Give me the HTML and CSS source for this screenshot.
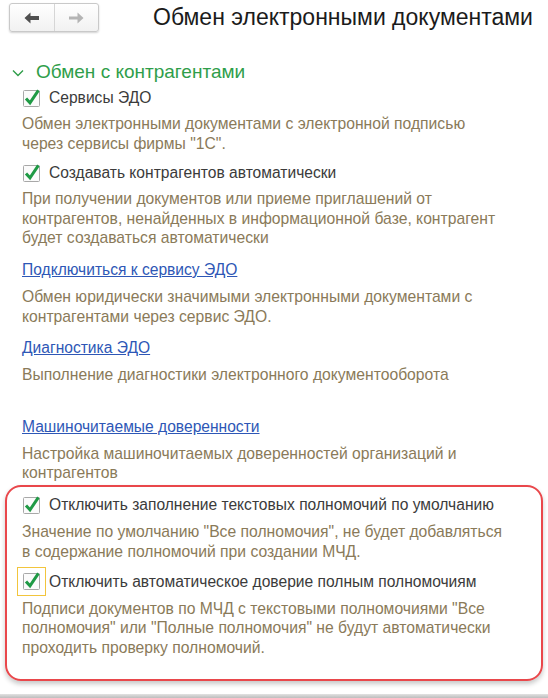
FILE: index.html
```html
<!DOCTYPE html>
<html lang="ru">
<head>
<meta charset="utf-8">
<title>Обмен электронными документами</title>
<link rel="stylesheet" href="styles.css">
</head>
<body>
<div class="page">
  <div class="topbar">
    <div class="nav">
      <button class="nav-btn" type="button" aria-label="Назад">
        <svg width="16" height="12" viewBox="0 0 16 12"><path d="M0.5 6 L6.5 0.5 L6.5 4 L15 4 L15 8 L6.5 8 L6.5 11.5 Z" fill="#505050"/></svg>
      </button>
      <span class="nav-sep"></span>
      <button class="nav-btn" type="button" aria-label="Вперёд">
        <svg width="16" height="12" viewBox="0 0 16 12"><path d="M15.5 6 L9.5 0.5 L9.5 4.5 L1 4.5 L1 7.5 L9.5 7.5 L9.5 11.5 Z" fill="#b4b4b4"/></svg>
      </button>
    </div>
    <h1 class="title">Обмен электронными документами</h1>
  </div>

  <div class="content">
    <div class="group-title">
      <svg class="chevron" width="12" height="8" viewBox="0 0 12 8"><path d="M1 1.5 L6 6.5 L11 1.5" fill="none" stroke="#2f9e4a" stroke-width="1.4"/></svg>
      <span>Обмен с контрагентами</span>
    </div>

    <div class="item">
      <label class="check-row r1">
        <svg class="cb" width="17" height="17" viewBox="0 0 17 17"><rect x="0.5" y="0.5" width="16" height="16" rx="1" fill="#fbfbfb" stroke="#a8a8a8"/><path d="M3 8.4 L7 12.8 L15.4 0.4" fill="none" stroke="#1f9a45" stroke-width="3"/></svg>
        <span>Сервисы ЭДО</span>
      </label>
      <p class="desc">Обмен электронными документами с электронной подписью<br>через сервисы фирмы "1С".</p>
    </div>

    <div class="item r2">
      <label class="check-row">
        <svg class="cb" width="17" height="17" viewBox="0 0 17 17"><rect x="0.5" y="0.5" width="16" height="16" rx="1" fill="#fbfbfb" stroke="#a8a8a8"/><path d="M3 8.4 L7 12.8 L15.4 0.4" fill="none" stroke="#1f9a45" stroke-width="3"/></svg>
        <span>Создавать контрагентов автоматически</span>
      </label>
      <p class="desc">При получении документов или приеме приглашений от<br>контрагентов, ненайденных в информационной базе, контрагент<br>будет создаваться автоматически</p>
    </div>

    <div class="item r3">
      <a class="link" href="#">Подключиться к сервису ЭДО</a>
      <p class="desc">Обмен юридически значимыми электронными документами с<br>контрагентами через сервис ЭДО.</p>
    </div>

    <div class="item r4">
      <a class="link" href="#">Диагностика ЭДО</a>
      <p class="desc">Выполнение диагностики электронного документооборота</p>
    </div>

    <div class="item r5">
      <a class="link" href="#">Машиночитаемые доверенности</a>
      <p class="desc">Настройка машиночитаемых доверенностей организаций и<br>контрагентов</p>
    </div>

    <div class="highlight">
      <div class="item">
        <label class="check-row">
          <svg class="cb" width="17" height="17" viewBox="0 0 17 17"><rect x="0.5" y="0.5" width="16" height="16" rx="1" fill="#fbfbfb" stroke="#a8a8a8"/><path d="M3 8.4 L7 12.8 L15.4 0.4" fill="none" stroke="#1f9a45" stroke-width="3"/></svg>
          <span>Отключить заполнение текстовых полномочий по умолчанию</span>
        </label>
        <p class="desc">Значение по умолчанию "Все полномочия", не будет добавляться<br>в содержание полномочий при создании МЧД.</p>
      </div>
      <div class="item r7">
        <label class="check-row">
          <svg class="cb focused" width="17" height="17" viewBox="0 0 17 17"><rect x="0.5" y="0.5" width="16" height="16" rx="1" fill="#fbfbfb" stroke="#a8a8a8"/><path d="M3 8.4 L7 12.8 L15.4 0.4" fill="none" stroke="#1f9a45" stroke-width="3"/></svg>
          <span>Отключить автоматическое доверие полным полномочиям</span>
        </label>
        <p class="desc">Подписи документов по МЧД с текстовыми полномочиями "Все<br>полномочия" или "Полные полномочия" не будут автоматически<br>проходить проверку полномочий.</p>
      </div>
    </div>
  </div>

  <div class="bottom-bar"></div>
</div>
</body>
</html>
```

FILE: styles.css
```css
* { box-sizing: border-box; }

html, body {
  margin: 0;
  padding: 0;
  background: #ffffff;
}

body {
  font-family: "Liberation Sans", Arial, sans-serif;
  color: #3a3a3a;
}

.page {
  width: 548px;
  height: 698px;
  display: flex;
  flex-direction: column;
  overflow: hidden;
}

/* top bar */
.topbar {
  display: flex;
  align-items: center;
  padding: 3px 0 0 9px;
}

.nav {
  display: flex;
  align-items: stretch;
  width: 90px;
  height: 29px;
  border: 1px solid #c9c9c9;
  border-radius: 3px;
  background: linear-gradient(#ffffff, #f1f1f1);
  box-shadow: 0 1px 2px rgba(0, 0, 0, 0.18);
}

.nav-btn {
  flex: 1;
  display: flex;
  align-items: center;
  justify-content: center;
  border: 0;
  background: transparent;
  padding: 0;
  margin: 0;
}

.nav-sep {
  width: 1px;
  background: #d6d6d6;
}

.title {
  margin: 0 0 0 54px;
  font-size: 23px;
  font-weight: normal;
  line-height: 29px;
  color: #1b1b1b;
  white-space: nowrap;
}

/* content */
.content {
  padding: 0 5px;
}

.group-title {
  display: flex;
  align-items: center;
  margin-top: 28px;
  height: 24px;
  padding-left: 7px;
  font-size: 19px;
  line-height: 24px;
  color: #2f9e4a;
  white-space: nowrap;
}

.chevron {
  margin-right: 12px;
  margin-top: 1px;
}

.item {
  padding-left: 17px;
}

.check-row {
  display: flex;
  align-items: center;
  height: 20px;
  font-size: 15.6px;
  line-height: 20px;
  color: #3b3b3b;
  white-space: nowrap;
}

.r1 { margin-top: 4px; }

.cb {
  flex: none;
  margin: 0 9px 0 1px;
  overflow: visible;
}

.cb.focused {
  outline: 1px solid #f2c53d;
  outline-offset: 5px;
}

.desc {
  margin: 7px 0 0;
  font-size: 15.7px;
  line-height: 19.5px;
  color: #8a7a59;
  white-space: nowrap;
}

.item .check-row + .desc { margin-top: 6px; }
.item:first-of-type .check-row + .desc { margin-top: 7px; }

.link {
  display: block;
  height: 20px;
  font-size: 15.6px;
  line-height: 20px;
  color: #2e57b6;
  text-decoration: underline;
  white-space: nowrap;
}

.r2 { margin-top: 10px; }
.r3 { margin-top: 12.5px; }
.r4 { margin-top: 12px; }
.r5 { margin-top: 32px; }

.highlight {
  margin-top: 2.5px;
  border: 2px solid #e9474b;
  border-radius: 16px;
  padding: 8px 0 22px 0;
  box-shadow: 0 3px 5px rgba(0, 0, 0, 0.22);
}

.highlight .item {
  padding-left: 15px;
}

.highlight .item .check-row + .desc { margin-top: 7px; }

.r7 { margin-top: 10.5px; }

.bottom-bar {
  margin-top: auto;
  height: 4px;
  background: linear-gradient(#e2e2e2, #bdbdbd);
}
```
